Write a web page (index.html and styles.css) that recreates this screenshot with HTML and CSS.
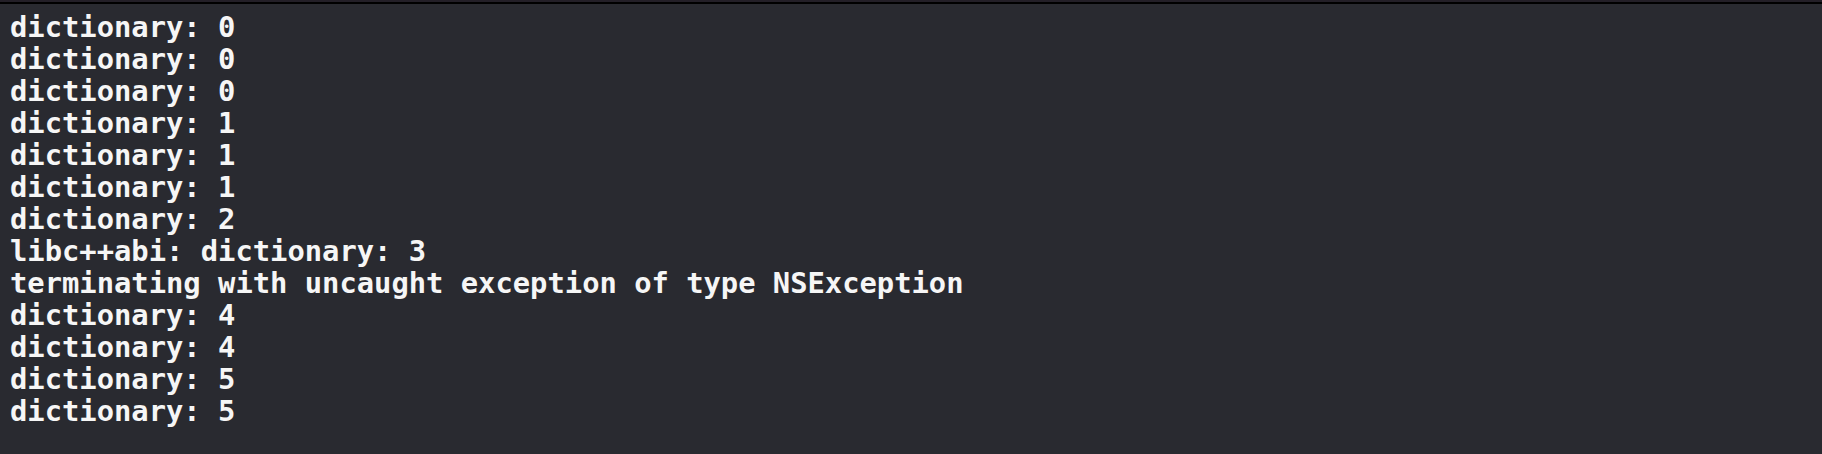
FILE: index.html
```html
<!DOCTYPE html>
<html>
<head>
<meta charset="utf-8">
<link rel="stylesheet" href="styles.css">
</head>
<body>
<div class="console">
<div class="line">dictionary: 0</div>
<div class="line">dictionary: 0</div>
<div class="line">dictionary: 0</div>
<div class="line">dictionary: 1</div>
<div class="line">dictionary: 1</div>
<div class="line">dictionary: 1</div>
<div class="line">dictionary: 2</div>
<div class="line">libc++abi: dictionary: 3</div>
<div class="line">terminating with uncaught exception of type NSException</div>
<div class="line">dictionary: 4</div>
<div class="line">dictionary: 4</div>
<div class="line">dictionary: 5</div>
<div class="line">dictionary: 5</div>
</div>
</body>
</html>
```
FILE: styles.css
```css
html, body {
  margin: 0;
  padding: 0;
  background: #292a30;
  height: 100%;
}
body {
  border-top: 2px solid #231f27;
  box-sizing: border-box;
}
.console {
  border-top: 2px solid #000000;
  padding: 7px 9px 0 10px;
  font-family: "DejaVu Sans Mono", "Liberation Mono", monospace;
  font-weight: bold;
  font-size: 28.8px;
  line-height: 32px;
  color: #f6f6f6;
}
.line {
  white-space: pre;
  height: 32px;
}
```
